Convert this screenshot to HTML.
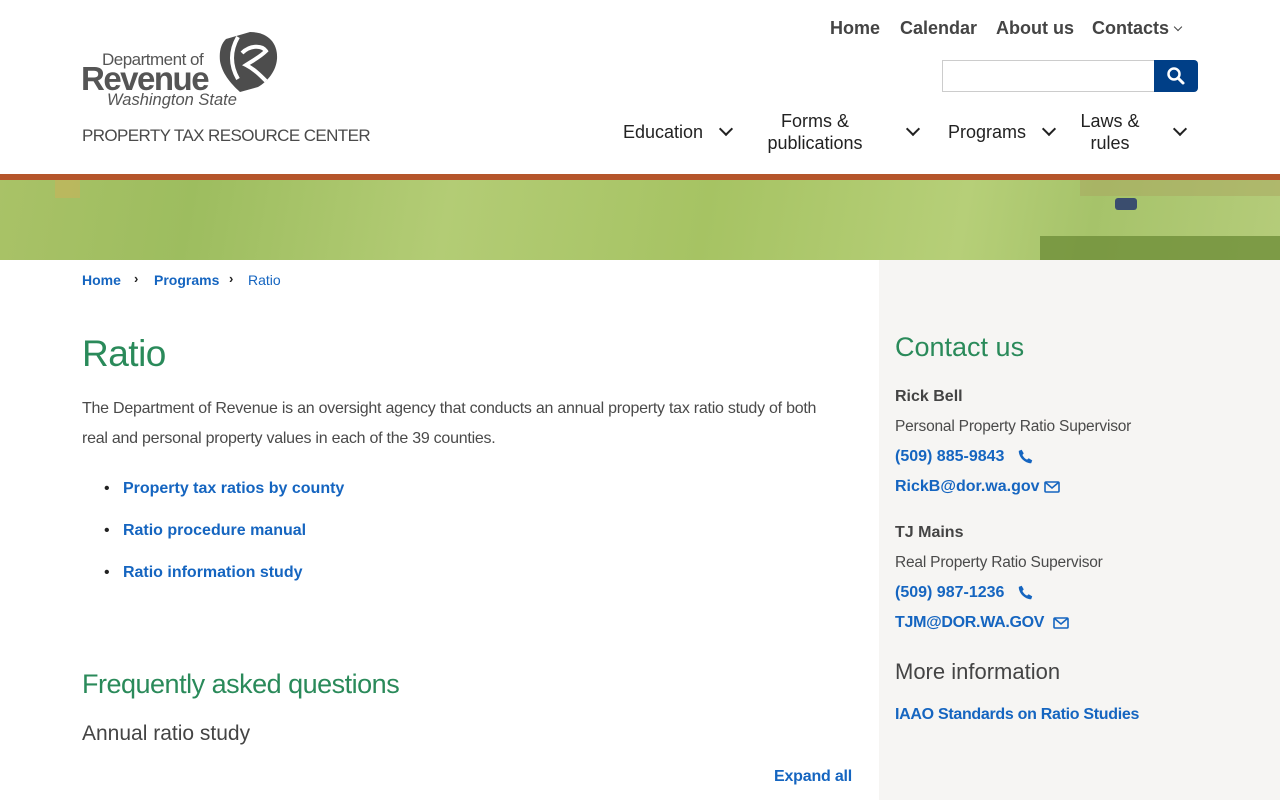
<!DOCTYPE html>
<html><head><meta charset="utf-8"><style>
*{margin:0;padding:0;box-sizing:border-box}
body{width:1280px;height:800px;overflow:hidden;background:#fff;font-family:"Liberation Sans","DejaVu Sans",sans-serif;color:#4a4a4a;position:relative}
.a{position:absolute;white-space:nowrap}
a{color:#1565c0;text-decoration:none;font-weight:bold}
.top{font-weight:bold;font-size:18px;color:#444;top:18px}
.nav{font-size:18px;color:#222;text-align:center;line-height:22px}
.chev{position:absolute;width:10px;height:10px;border-right:2px solid #222;border-bottom:2px solid #222;transform:rotate(45deg)}
.green{color:#2a8a5a}
</style></head><body>
<!-- logo -->
<div class="a" style="left:102px;top:50px;font-size:17px;color:#555;letter-spacing:-0.5px">Department of</div>
<div class="a" style="left:81px;top:60px;font-size:33px;font-weight:bold;color:#555;letter-spacing:-1.5px">Revenue</div>
<div class="a" style="left:107px;top:91px;font-size:16.5px;font-style:italic;color:#555">Washington State</div>
<svg class="a" style="left:216px;top:31px" width="64" height="62" viewBox="0 0 64 62">
<path d="M10 8 L34 1 C52 1 62 12 61 28 C60 40 52 50 42 56 L24 61 C14 52 6 42 4 30 C3 20 5 13 10 8Z" fill="#4d4d4d"/>
<path d="M22 6 C14 20 14 34 22 48" stroke="#fff" stroke-width="4" fill="none"/>
<path d="M26 22 C34 14 46 14 50 20 C44 26 36 30 30 34 C38 38 44 44 50 50" stroke="#fff" stroke-width="4" fill="none"/>
</svg>
<div class="a" style="left:82px;top:126px;font-size:17px;color:#4a4a4a;letter-spacing:-0.6px">PROPERTY TAX RESOURCE CENTER</div>

<!-- top nav -->
<div class="a top" style="left:830px">Home</div>
<div class="a top" style="left:900px">Calendar</div>
<div class="a top" style="left:996px">About us</div>
<div class="a top" style="left:1092px">Contacts</div>
<div class="chev" style="left:1175px;top:24px;width:6px;height:6px;border-width:1.5px;border-color:#444"></div>
<div class="a" style="left:942px;top:60px;width:214px;height:32px;border:1px solid #ccc"></div>
<div class="a" style="left:1154px;top:60px;width:44px;height:32px;background:#003f87;border-radius:0 4px 4px 0"></div>
<svg class="a" style="left:1166px;top:66px" width="20" height="20" viewBox="0 0 20 20"><circle cx="8" cy="8" r="5.5" stroke="#fff" stroke-width="2.5" fill="none"/><path d="M12 12 L17 17" stroke="#fff" stroke-width="3" stroke-linecap="round"/></svg>

<div class="a nav" style="left:623px;top:121px">Education</div>
<div class="chev" style="left:721px;top:124px"></div>
<div class="a nav" style="left:762px;top:110px;width:106px">Forms &amp;<br>publications</div>
<div class="chev" style="left:908px;top:124px"></div>
<div class="a nav" style="left:948px;top:121px">Programs</div>
<div class="chev" style="left:1044px;top:124px"></div>
<div class="a nav" style="left:1078px;top:110px;width:64px">Laws &amp;<br>rules</div>
<div class="chev" style="left:1175px;top:124px"></div>

<!-- banner -->
<div class="a" style="left:0;top:174px;width:1280px;height:6px;background:#b5552a"></div>
<div class="a" style="left:0;top:180px;width:1280px;height:80px;background:
radial-gradient(ellipse 200px 40px at 300px 230px,rgba(120,150,50,.5),transparent),
radial-gradient(ellipse 250px 30px at 700px 220px,rgba(130,160,60,.45),transparent),
radial-gradient(ellipse 160px 30px at 120px 210px,rgba(120,150,50,.4),transparent),
linear-gradient(100deg,#a9c267 0%,#9dbd5f 15%,#b3cc75 35%,#a6c363 55%,#b6cf78 75%,#a6c36a 85%,#b5cc7a 100%)"></div>
<div class="a" style="left:55px;top:180px;width:25px;height:18px;background:#c8b35a;opacity:.6"></div>
<div class="a" style="left:1040px;top:236px;width:240px;height:24px;background:#6f8f3a;opacity:.8"></div>
<div class="a" style="left:1080px;top:180px;width:200px;height:16px;background:#a9a560;opacity:.5"></div>
<div class="a" style="left:1115px;top:198px;width:22px;height:12px;background:#3a4d6e;border-radius:3px"></div>

<!-- sidebar bg -->
<div class="a" style="left:879px;top:260px;width:401px;height:540px;background:#f6f5f3"></div>

<!-- breadcrumb -->
<div class="a" style="left:82px;top:272px;font-size:14px"><a>Home</a></div>
<div class="a" style="left:134px;top:271px;font-size:13px;color:#222;font-weight:bold">›</div>
<div class="a" style="left:154px;top:272px;font-size:14px"><a>Programs</a></div>
<div class="a" style="left:229px;top:271px;font-size:13px;color:#222;font-weight:bold">›</div>
<div class="a" style="left:248px;top:272px;font-size:14px;color:#1565c0">Ratio</div>

<div class="a green" style="left:82px;top:333px;font-size:37px;font-weight:300;letter-spacing:-0.5px">Ratio</div>
<div class="a" style="left:82px;top:394px;font-size:16px;line-height:30px;letter-spacing:-0.25px">The Department of Revenue is an oversight agency that conducts an annual property tax ratio study of both<br>real and personal property values in each of the 39 counties.</div>
<div class="a" style="left:104px;top:468px;font-size:16px;line-height:42px;color:#222">•&nbsp;&nbsp;&nbsp;<a>Property tax ratios by county</a><br>•&nbsp;&nbsp;&nbsp;<a>Ratio procedure manual</a><br>•&nbsp;&nbsp;&nbsp;<a>Ratio information study</a></div>

<div class="a green" style="left:82px;top:669px;font-size:27px;font-weight:300;letter-spacing:-0.5px">Frequently asked questions</div>
<div class="a" style="left:82px;top:722px;font-size:21px;color:#444">Annual ratio study</div>
<div class="a" style="left:774px;top:768px;font-size:16px;letter-spacing:-0.2px"><a>Expand all</a></div>

<!-- sidebar -->
<div class="a green" style="left:895px;top:332px;font-size:27px">Contact us</div>
<div class="a" style="left:895px;top:388px;font-size:16px;font-weight:bold;color:#444">Rick Bell</div>
<div class="a" style="left:895px;top:418px;font-size:15.5px;letter-spacing:-0.2px">Personal Property Ratio Supervisor</div>
<div class="a" style="left:895px;top:448px;font-size:16px"><a>(509) 885-9843</a></div>
<svg class="a" style="left:1017px;top:448px" width="17" height="17" viewBox="0 0 24 24"><path d="M6.6 2.5 L9.5 7.5 7.6 9.8 C8.9 12.6 11.4 15.1 14.2 16.4 L16.5 14.5 21.5 17.4 20 21.5 C11 21.5 2.5 13 2.5 4Z" fill="#1565c0"/></svg>
<div class="a" style="left:895px;top:478px;font-size:16px"><a>RickB@dor.wa.gov</a></div>
<svg class="a" style="left:1044px;top:481px" width="16" height="12" viewBox="0 0 16 12"><rect x="1" y="1" width="14" height="10" rx="1" fill="none" stroke="#1565c0" stroke-width="1.6"/><path d="M1.5 1.5 L8 7 14.5 1.5" fill="none" stroke="#1565c0" stroke-width="1.6"/></svg>
<div class="a" style="left:895px;top:524px;font-size:16px;font-weight:bold;color:#444">TJ Mains</div>
<div class="a" style="left:895px;top:554px;font-size:15.5px;letter-spacing:-0.2px">Real Property Ratio Supervisor</div>
<div class="a" style="left:895px;top:584px;font-size:16px"><a>(509) 987-1236</a></div>
<svg class="a" style="left:1017px;top:584px" width="17" height="17" viewBox="0 0 24 24"><path d="M6.6 2.5 L9.5 7.5 7.6 9.8 C8.9 12.6 11.4 15.1 14.2 16.4 L16.5 14.5 21.5 17.4 20 21.5 C11 21.5 2.5 13 2.5 4Z" fill="#1565c0"/></svg>
<div class="a" style="left:895px;top:614px;font-size:16px;letter-spacing:-0.3px"><a>TJM@DOR.WA.GOV</a></div>
<svg class="a" style="left:1053px;top:617px" width="16" height="12" viewBox="0 0 16 12"><rect x="1" y="1" width="14" height="10" rx="1" fill="none" stroke="#1565c0" stroke-width="1.6"/><path d="M1.5 1.5 L8 7 14.5 1.5" fill="none" stroke="#1565c0" stroke-width="1.6"/></svg>
<div class="a" style="left:895px;top:659px;font-size:22px;color:#444">More information</div>
<div class="a" style="left:895px;top:706px;font-size:16px;letter-spacing:-0.3px"><a>IAAO Standards on Ratio Studies</a></div>
</body></html>
